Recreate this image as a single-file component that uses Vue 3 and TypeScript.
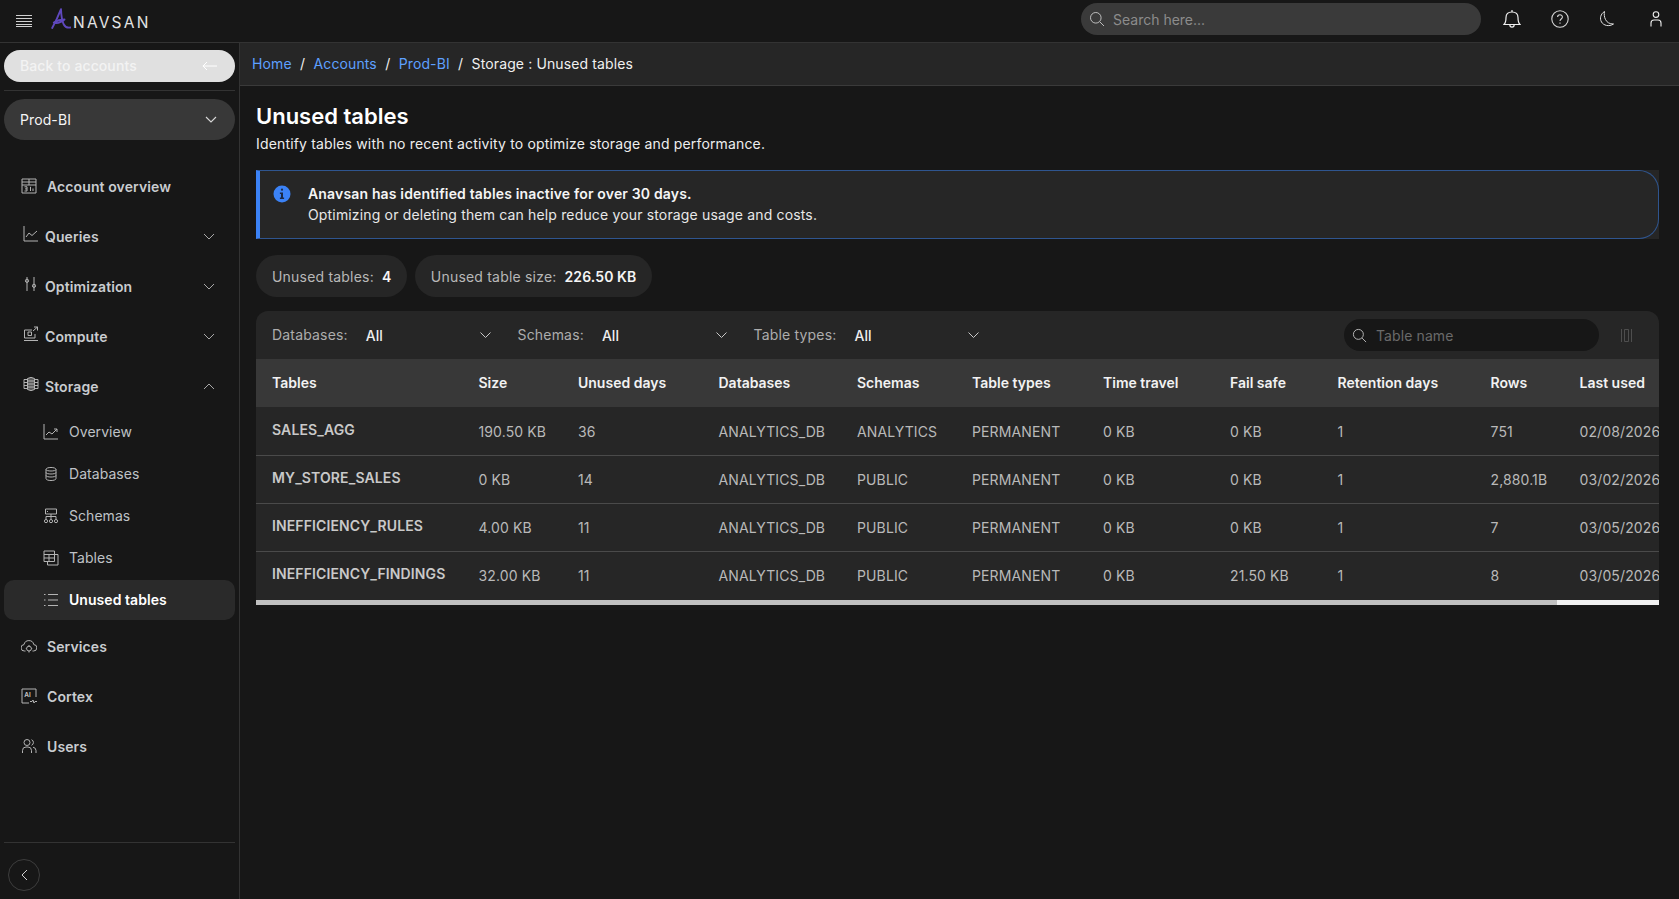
<script setup lang="ts">
const icons: Record<string, string[]> = {
  calendar: ['M1 1H15V15H1Z', 'M1 4H15', 'M1 7H15', 'M8 1V7', 'M3.5 8.8H6V13H3.5', 'M4 10.9H6', 'M9.5 8.8V13', 'M12 10.5V13'],
  chart: ['M1 0V15H15', 'M3 11L6 7L9 9.5L14 5'],
  sliders: ['M4 1V15', 'M11 1V15', 'M4 3.2A1.6 1.6 0 1 0 4 6.4A1.6 1.6 0 1 0 4 3.2Z', 'M11 8.2A1.6 1.6 0 1 0 11 11.4A1.6 1.6 0 1 0 11 8.2Z'],
  compute: ['M1 14.5H15', 'M1.5 12V4H9', 'M1.5 12H12V8', 'M5 6H8.5V9.5H5Z', 'M10 5L14.5 1', 'M11 1H14.5V4.5'],
  storage: ['M1 3.5H4.5V12.5H1Z', 'M11.5 3.5H15V12.5H11.5Z', 'M1 6.5H4.5', 'M1 9.5H4.5', 'M11.5 6.5H15', 'M11.5 9.5H15', 'M4.5 5H11.5', 'M4.5 8H11.5', 'M4.5 11H11.5'],
  trend: ['M1 0V15H15', 'M3 11L6 8L9 10L14 5', 'M11 5H14V8'],
  db: ['M3 3.5C3 0.8 13 0.8 13 3.5V12.5C13 15.2 3 15.2 3 12.5Z', 'M3 3.5C3 5.5 13 5.5 13 3.5', 'M3 6.5C3 8.5 13 8.5 13 6.5', 'M3 9.5C3 11.5 13 11.5 13 9.5'],
  schema: ['M2.5 1H13.5V6H2.5Z', 'M8 6V11', 'M3 11V8.5H13V11', 'M3 11.5A1.6 1.6 0 1 0 3 14.7A1.6 1.6 0 1 0 3 11.5Z', 'M8 11.5A1.6 1.6 0 1 0 8 14.7A1.6 1.6 0 1 0 8 11.5Z', 'M13 11.5A1.6 1.6 0 1 0 13 14.7A1.6 1.6 0 1 0 13 11.5Z', 'M4 3.5H5'],
  tables: ['M1 1H11.5V11.5H1Z', 'M1 4.5H11.5', 'M1 8H11.5', 'M6 4.5V11.5', 'M11.5 4.5H15V15H4.5V11.5'],
  list: ['M5 2.5H15', 'M5 8H15', 'M5 13.5H15', 'M1 2.5H2.5', 'M1 8H2.5', 'M1 13.5H2.5'],
  cloud: ['M4.5 13H3.5A3.2 3.2 0 0 1 3 6.6A5 5 0 0 1 12.8 6.6A3.2 3.2 0 0 1 12.5 13H11.5', 'M8 8.2A2.4 2.4 0 1 0 8 13A2.4 2.4 0 1 0 8 8.2Z', 'M8 7V8.2', 'M8 13V14.5', 'M4.8 10.6H5.6', 'M10.4 10.6H11.2'],
  cortex: ['M15 9V1H1V15H8', 'M9 13.5H11L12 12L13 15L14 13.5H16'],
  users: ['M6 1.5A3 3 0 1 0 6 7.5A3 3 0 1 0 6 1.5Z', 'M1.5 15V12.5A3.5 3.5 0 0 1 5 9H7A3.5 3.5 0 0 1 10.5 12.5V15', 'M10.5 1.7A3 3 0 0 1 10.5 7.3', 'M12 9.2A3.5 3.5 0 0 1 15 12.5V15'],
}

const topItems = [
  { label: 'Account overview', icon: 'calendar', wide: true },
  { label: 'Queries', icon: 'chart', chevron: 'down' },
  { label: 'Optimization', icon: 'sliders', chevron: 'down' },
  { label: 'Compute', icon: 'compute', chevron: 'down' },
  { label: 'Storage', icon: 'storage', chevron: 'up' },
]
const subItems = [
  { label: 'Overview', icon: 'trend' },
  { label: 'Databases', icon: 'db' },
  { label: 'Schemas', icon: 'schema' },
  { label: 'Tables', icon: 'tables' },
  { label: 'Unused tables', icon: 'list', active: true },
]
const bottomItems = [
  { label: 'Services', icon: 'cloud', wide: true },
  { label: 'Cortex', icon: 'cortex', wide: true },
  { label: 'Users', icon: 'users', wide: true },
]

const filters = [
  { label: 'Databases:', width: 'f-db' },
  { label: 'Schemas:', width: 'f-sc' },
  { label: 'Table types:', width: 'f-tt' },
]

const columns = [
  { title: 'Tables', w: 206.5 },
  { title: 'Size', w: 99.5 },
  { title: 'Unused days', w: 140.5 },
  { title: 'Databases', w: 138.5 },
  { title: 'Schemas', w: 115 },
  { title: 'Table types', w: 131 },
  { title: 'Time travel', w: 127 },
  { title: 'Fail safe', w: 107.5 },
  { title: 'Retention days', w: 153 },
  { title: 'Rows', w: 89 },
  { title: 'Last used', w: 120 },
]
const rows = [
  ['SALES_AGG', '190.50 KB', '36', 'ANALYTICS_DB', 'ANALYTICS', 'PERMANENT', '0 KB', '0 KB', '1', '751', '02/08/2026'],
  ['MY_STORE_SALES', '0 KB', '14', 'ANALYTICS_DB', 'PUBLIC', 'PERMANENT', '0 KB', '0 KB', '1', '2,880.1B', '03/02/2026'],
  ['INEFFICIENCY_RULES', '4.00 KB', '11', 'ANALYTICS_DB', 'PUBLIC', 'PERMANENT', '0 KB', '0 KB', '1', '7', '03/05/2026'],
  ['INEFFICIENCY_FINDINGS', '32.00 KB', '11', 'ANALYTICS_DB', 'PUBLIC', 'PERMANENT', '0 KB', '21.50 KB', '1', '8', '03/05/2026'],
]
</script>

<template>
  <div class="app">
    <header class="topbar">
      <div class="brand">
        <svg class="burger" width="16" height="12" viewBox="0 0 16 12" fill="none" stroke="#d0d0d0" stroke-width="1">
          <path d="M0 .5H16M0 3.5H16M0 6.5H16M0 9.5H16M0 11.5H16" />
        </svg>
        <svg class="logo-a" width="20" height="22" viewBox="0 0 20 22" fill="none" stroke="#5f48bd" stroke-width="1.9" stroke-linecap="round" stroke-linejoin="round">
          <path d="M1.2 20C4 15 7.5 7.5 10 1.2C10.2 7 11 13 12.8 16.5C14 19 16.5 20 19.5 19.5" />
          <path d="M2.8 14.5C6 12.5 10 11.5 13.5 11.5C11 13.5 7.5 15.5 4.5 15" />
        </svg>
        <span class="wordmark">NAVSAN</span>
      </div>
      <div class="top-right">
        <div class="top-search">
          <svg width="16" height="16" viewBox="0 0 16 16" fill="none" stroke="#bdbdbd" stroke-width="1">
            <circle cx="6.8" cy="6.8" r="5.3" /><path d="M10.8 10.8L15 15" />
          </svg>
          <span>Search here...</span>
        </div>
        <div class="top-icons">
          <svg width="18" height="20" viewBox="0 0 18 20" fill="none" stroke="#f0f0f0" stroke-width="1.2">
            <path d="M1 15.5C3 13.5 3 12 3 8.5C3 5 5.5 3 9 3C12.5 3 15 5 15 8.5C15 12 15 13.5 17 15.5Z" />
            <path d="M9 3V1" /><path d="M6.8 15.5C6.8 19 11.2 19 11.2 15.5" />
          </svg>
          <svg width="18" height="18" viewBox="0 0 18 18" fill="none" stroke="#d8d8d8" stroke-width="1.1">
            <circle cx="9" cy="9" r="8.2" />
            <path d="M6.6 7C6.6 4 11.4 4 11.4 7C11.4 9 9 9 9 11" /><path d="M9 12.6V13.8" />
          </svg>
          <svg width="16" height="18" viewBox="0 0 16 18" fill="none" stroke="#e0e0e0" stroke-width="1">
            <path d="M5.5 1.5C1.5 4 .5 8.5 2.5 12C4.5 15.5 10 17 14.5 14C10.5 14 8 12.5 6.5 9.5C5.2 7 5 4 5.5 1.5Z" />
          </svg>
          <svg class="user-icon" width="12" height="16" viewBox="0 0 12 16" fill="none" stroke="#f0f0f0" stroke-width="1.1">
            <circle cx="6" cy="3.6" r="2.8" /><path d="M1 15.5V12C1 10 2.5 9 4 9H8C9.5 9 11 10 11 12V15.5" />
          </svg>
        </div>
      </div>
    </header>

    <div class="shell">
      <aside class="sidebar">
        <div class="side-top">
          <button class="back">
            <span>Back to accounts</span>
            <svg width="15" height="10" viewBox="0 0 15 10" fill="none" stroke="#fff" stroke-width="1">
              <path d="M15 5H.8M5 1L1 5L5 9" />
            </svg>
          </button>
          <div class="side-rule"></div>
          <div class="account">
            <span>Prod-BI</span>
            <svg class="chev" width="12" height="7" viewBox="0 0 12 7" fill="none" stroke="#d8d8d8" stroke-width="1.1"><path d="M1 1L6 6L11 1" /></svg>
          </div>
        </div>
        <nav class="nav">
          <div v-for="item in topItems" :key="item.label" class="nav-item" :class="{ wide: item.wide }">
            <svg class="nav-icon" width="16" height="16" viewBox="0 0 16 16" fill="none" stroke="#b4b4b4" stroke-width="1">
              <path v-if="item.icon === 'storage'" d="M4.5 2.5Q8 0.3 11.5 2.5V13.5Q8 15.7 4.5 13.5Z" fill="#5a5a5a" />
              <path v-for="d in icons[item.icon]" :key="d" :d="d" />
            </svg>
            <span class="nav-label">{{ item.label }}</span>
            <svg v-if="item.chevron" class="nav-chev" width="12" height="7" viewBox="0 0 12 7" fill="none" stroke="#a8a8a8" stroke-width="1">
              <path :d="item.chevron === 'up' ? 'M1 6L6 1L11 6' : 'M1 1L6 6L11 1'" />
            </svg>
          </div>
          <div class="sub-list">
            <div v-for="item in subItems" :key="item.label" class="sub-item">
              <div class="sub-inner" :class="{ active: item.active }">
                <svg width="16" height="16" viewBox="0 0 16 16" fill="none" stroke="#b4b4b4" stroke-width="1">
                  <path v-for="d in icons[item.icon]" :key="d" :d="d" />
                </svg>
                <span>{{ item.label }}</span>
              </div>
            </div>
          </div>
          <div v-for="item in bottomItems" :key="item.label" class="nav-item" :class="{ wide: item.wide }">
            <svg class="nav-icon" width="16" height="16" viewBox="0 0 16 16" fill="none" stroke="#b4b4b4" stroke-width="1">
              <path v-for="d in icons[item.icon]" :key="d" :d="d" />
              <text v-if="item.icon === 'cortex'" x="3.2" y="9" class="ai-text">AI</text>
            </svg>
            <span class="nav-label">{{ item.label }}</span>
          </div>
        </nav>
        <div class="side-foot">
          <button class="collapse">
            <svg width="7" height="12" viewBox="0 0 7 12" fill="none" stroke="#d0d0d0" stroke-width="1"><path d="M6 1L1 6L6 11" /></svg>
          </button>
        </div>
      </aside>

      <main class="main">
        <div class="crumbs">
          <a>Home</a><i>/</i><a>Accounts</a><i>/</i><a>Prod-BI</a><i>/</i><b>Storage : Unused tables</b>
        </div>
        <div class="content">
          <h1>Unused tables</h1>
          <p class="lead">Identify tables with no recent activity to optimize storage and performance.</p>

          <div class="alert-bg">
            <div class="alert">
              <svg class="info" width="18" height="18" viewBox="0 0 18 18">
                <circle cx="9" cy="9" r="8.5" fill="#3b82f6" />
                <rect x="7.9" y="3.6" width="2.2" height="2.2" rx="1.1" fill="#1c2a44" />
                <path d="M6.9 7.5H10V12.6H11.1V14H6.9V12.6H8V8.9H6.9Z" fill="#1c2a44" />
              </svg>
              <div class="alert-text">
                <strong>Anavsan has identified tables inactive for over 30 days.</strong>
                <span>Optimizing or deleting them can help reduce your storage usage and costs.</span>
              </div>
            </div>
          </div>

          <div class="chips">
            <div class="chip">Unused tables:<b>4</b></div>
            <div class="chip">Unused table size:<b>226.50 KB</b></div>
          </div>

          <section class="card">
            <div class="toolbar">
              <div v-for="f in filters" :key="f.label" class="filter" :class="f.width">
                <span class="f-label">{{ f.label }}</span>
                <span class="f-value">All</span>
                <svg width="11" height="6" viewBox="0 0 11 6" fill="none" stroke="#c8c8c8" stroke-width="1"><path d="M.5 .5L5.5 5.5L10.5 .5" /></svg>
              </div>
              <div class="table-search">
                <svg width="15" height="15" viewBox="0 0 16 16" fill="none" stroke="#bdbdbd" stroke-width="1">
                  <circle cx="6.8" cy="6.8" r="5.3" /><path d="M10.8 10.8L15 15" />
                </svg>
                <span>Table name</span>
              </div>
              <svg class="col-icon" width="11" height="13" viewBox="0 0 11 13" fill="none" stroke="#4e4e4e" stroke-width="1">
                <path d="M.5 0V13M10.5 0V13M3.5 .5H7.5V12.5H3.5Z" />
              </svg>
            </div>
            <div class="table-wrap">
              <table>
                <colgroup>
                  <col v-for="c in columns" :key="c.title" :style="{ width: c.w + 'px' }" />
                </colgroup>
                <thead>
                  <tr><th v-for="c in columns" :key="c.title">{{ c.title }}</th></tr>
                </thead>
                <tbody>
                  <tr v-for="r in rows" :key="r[0]">
                    <td v-for="(v, i) in r" :key="i" :class="{ name: i === 0 }"><span>{{ v }}</span></td>
                  </tr>
                </tbody>
              </table>
            </div>
            <div class="scrollbar"><div class="thumb"></div></div>
          </section>
        </div>
      </main>
    </div>
  </div>
</template>

<style>
html, body { margin: 0; background: #171717; }
</style>

<style scoped>
.app {
  height: 899px;
  overflow: hidden;
  background: #171717;
  color: #fff;
  font-family: Inter, "Liberation Sans", sans-serif;
  font-size: 14px;
  display: flex;
  flex-direction: column;
}
.topbar {
  height: 42px;
  flex: none;
  border-bottom: 1px solid #333;
  display: flex;
  align-items: center;
  justify-content: space-between;
  padding: 0 17px 0 16px;
}
.brand { display: flex; align-items: center; margin-top: -1px; }
.burger { margin-right: 21px; }
.logo-a { margin-bottom: 4px; margin-left: -2px; margin-right: 2px; }
.wordmark { font-size: 15.5px; letter-spacing: 2.2px; color: #e4e4e4; margin-top: 3px; }
.top-right { display: flex; align-items: center; margin-top: -4px; }
.top-search {
  width: 400px;
  height: 32px;
  box-sizing: border-box;
  background: #3a3a3a;
  border-radius: 16px;
  display: flex;
  align-items: center;
  gap: 8px;
  padding-left: 8px;
  color: #8c8c8c;
}
.top-icons { display: flex; align-items: center; gap: 30px; margin-left: 22px; }
.user-icon { margin-left: 5px; }
.shell { flex: 1; display: flex; min-height: 0; }
.sidebar {
  width: 239px;
  flex: none;
  box-sizing: content-box;
  border-right: 1px solid #333;
  display: flex;
  flex-direction: column;
}
.side-top { padding: 7px 4px 0; }
.back {
  width: 100%;
  height: 32px;
  border: 0;
  border-radius: 16px;
  background: #e0e0e0;
  color: #f3f3f3;
  font: 500 14px Inter, "Liberation Sans", sans-serif;
  letter-spacing: 0.1px;
  display: flex;
  align-items: center;
  justify-content: space-between;
  padding: 0 18px 0 16px;
}
.back span { margin-top: -1px; }
.side-rule { height: 1px; background: #333; margin: 8px 0; }
.account {
  height: 41px;
  border-radius: 20.5px;
  background: #383838;
  display: flex;
  align-items: center;
  justify-content: space-between;
  padding: 0 18px 0 16px;
  color: #f5f5f5;
  letter-spacing: 0.1px;
}
.nav { margin-top: 21px; flex: 1; }
.nav-item {
  height: 50px;
  display: flex;
  align-items: center;
  padding-left: 23px;
  color: #c9ccd0;
  font-weight: 600;
  letter-spacing: 0.1px;
}
.nav-item.wide { padding-left: 21px; }
.nav-item svg.nav-icon { flex: none; margin-top: -4px; }
.nav-item.wide svg.nav-icon { margin-top: 0; }
.nav-label { margin-left: 6px; }
.wide .nav-label { margin-left: 10px; }
.nav-chev { margin-left: auto; margin-right: 24px; }
.sub-item { height: 42px; display: flex; align-items: center; padding: 0 4px; }
.sub-list { margin: 0; }
.sub-inner {
  flex: 1;
  height: 40px;
  border-radius: 10px;
  display: flex;
  align-items: center;
  gap: 10px;
  padding-left: 39px;
  color: #bfc2c6;
  letter-spacing: 0.05px;
}
.sub-inner span { margin-top: -2px; }
.sub-inner.active { background: #2a2a2a; color: #fff; font-weight: 600; }
.ai-text { font: 600 6.5px Inter, sans-serif; fill: #c8c8c8; stroke: none; }
.side-foot {
  margin: 0 4px;
  height: 57px;
  flex: none;
  border-top: 1px solid #333;
  display: flex;
  align-items: flex-start;
  padding-top: 16px;
  box-sizing: border-box;
}
.collapse {
  width: 32px;
  height: 32px;
  margin-left: 4px;
  border-radius: 50%;
  border: 1px solid #3d3d3d;
  background: transparent;
  display: flex;
  align-items: center;
  justify-content: center;
  padding: 0;
}
.main { flex: 1; min-width: 0; }
.crumbs {
  height: 43px;
  box-sizing: border-box;
  background: #262626;
  border-bottom: 1px solid #3a3a3a;
  display: flex;
  align-items: center;
  padding: 0 0 2px 12px;
  color: #f0f0f0;
  letter-spacing: 0.12px;
}
.crumbs a { color: #5ea0ff; }
.crumbs i { font-style: normal; margin: 0 8.3px; }
.crumbs b { font-weight: 400; }
.content { padding: 16px 20px 0 16px; }
h1 { margin: 0; font-size: 22px; line-height: 28px; font-weight: 600; color: #fff; }
.lead { margin: 4px 0 0; font-size: 14px; line-height: 20px; color: #eee; letter-spacing: 0.16px; }
.alert-bg { margin-top: 16px; background: #262626; height: 69px; }
.alert {
  height: 100%;
  box-sizing: border-box;
  border: 1px solid #2f558f;
  border-left: 4px solid #3b82f6;
  border-radius: 0 20px 20px 0;
  display: flex;
  padding: 14px 0 0 13px;
}
.info { flex: none; }
.alert-text { margin-left: 17px; display: flex; flex-direction: column; line-height: 20.5px; color: #e8e8e8; margin-top: -1px; letter-spacing: 0.16px; }
.alert-text strong { font-weight: 600; color: #f5f5f5; }
.chips { display: flex; gap: 7.5px; margin-top: 16px; }
.chip {
  height: 42px;
  border-radius: 21px;
  background: #262626;
  display: flex;
  align-items: center;
  padding: 0 16px;
  color: #b8b8b8;
  letter-spacing: 0.2px;
}
.chip b { margin-left: 8px; color: #f5f5f5; font-weight: 600; letter-spacing: 0.1px; }
.card { margin-top: 14px; border-radius: 12px 12px 0 0; overflow: hidden; background: #262626; }
.toolbar { height: 48px; display: flex; align-items: center; padding-left: 16px; }
.filter { display: flex; align-items: center; flex: none; }
.f-label { color: #adadad; margin-top: -1px; letter-spacing: 0.18px; }
.f-value { color: #eee; font-weight: 500; margin-top: 1px; }
.f-db { width: 245.5px; }
.f-db .f-value { margin-left: 18px; width: 114px; }
.f-sc { width: 236px; }
.f-sc .f-value { margin-left: 18px; width: 114px; }
.f-tt { width: 240px; }
.f-tt .f-value { margin-left: 18px; width: 114px; }
.table-search {
  margin-left: auto;
  width: 255px;
  height: 32px;
  box-sizing: border-box;
  border-radius: 16px;
  background: #171717;
  display: flex;
  align-items: center;
  gap: 9px;
  padding-left: 8px;
  color: #6a6a6a;
  letter-spacing: 0.1px;
}
.col-icon { margin: 0 27px 0 22px; }
.table-wrap { overflow: hidden; }
table { border-collapse: collapse; table-layout: fixed; width: 1427.5px; }
th {
  height: 48px;
  padding: 0 0 2px 16px;
  box-sizing: border-box;
  background: #383838;
  text-align: left;
  font-weight: 600;
  color: #f2f2f2;
  white-space: nowrap;
}
td {
  height: 48px;
  padding: 0 0 0 16px;
  box-sizing: border-box;
  color: #b9b9b9;
  border-bottom: 1px solid #4a4a4a;
  white-space: nowrap;
  letter-spacing: 0.12px;
}
tbody tr:last-child td { border-bottom: 0; }
td span { position: relative; top: 0; }
td.name { color: #c9c9c9; font-weight: 600; }
td.name span { top: -2px; }
tbody tr:first-child td span { top: 1px; }
tbody tr:first-child td.name span { top: -1px; }
.scrollbar { height: 5px; background: #f1f1f1; margin-top: 1px; }
.thumb { width: 1301px; height: 100%; background: #c1c1c1; }
</style>
